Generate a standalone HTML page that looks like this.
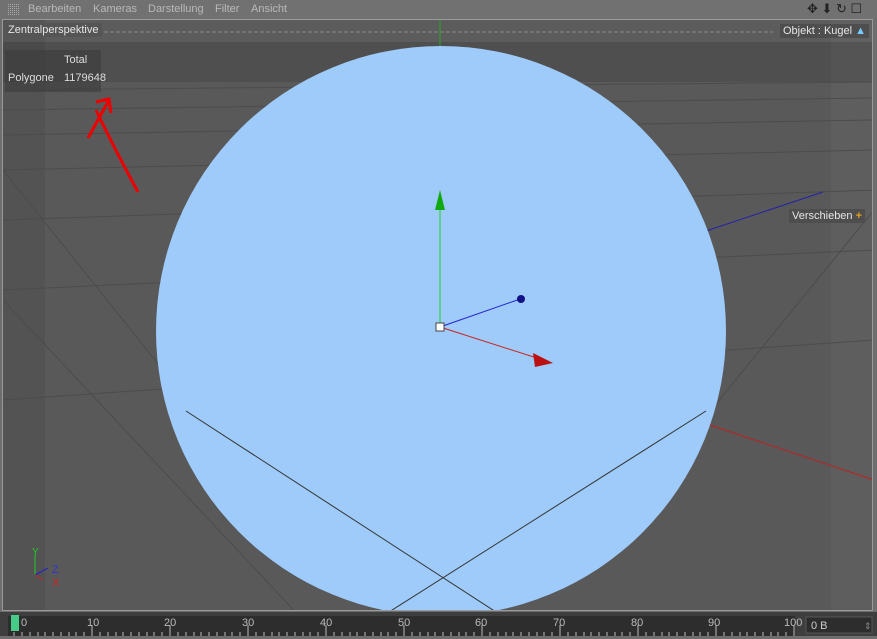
<!DOCTYPE html>
<html><head><style>
body{margin:0;width:877px;height:636px;overflow:hidden;background:#6e6e6e;font-family:"Liberation Sans",sans-serif;font-size:11px;position:relative}
.menu{position:absolute;left:0;top:0;width:877px;height:19px;background:#717171;color:#b9b9b9}
.menu span{position:absolute;top:3px}
.vp{position:absolute;left:2px;top:19px;width:871px;height:592px;background:#595959;border:1px solid #9a9a9a;box-sizing:border-box;overflow:hidden}
.lbl{position:absolute;background:#4e4e4e;color:#e6e6e6;padding:1px 3px}
.tl{position:absolute;left:0;top:612px;width:877px;height:24px;background:#3e3e3e}
</style></head><body>
<div class="menu">
<svg style="position:absolute;left:8px;top:4px" width="12" height="12"><pattern id="p" width="2" height="2" patternUnits="userSpaceOnUse"><rect width="1" height="1" fill="#aaa"/></pattern><rect width="12" height="12" fill="url(#p)"/></svg>
<span style="left:28px">Bearbeiten</span><span style="left:93px">Kameras</span><span style="left:148px">Darstellung</span><span style="left:215px">Filter</span><span style="left:251px">Ansicht</span>
<span style="left:807px;top:1px;color:#222;font-size:13px">✥ ⬇ ↻ ☐</span>
</div>
<div class="vp">
<svg width="871" height="592" style="position:absolute;left:0;top:0">
<rect x="0" y="0" width="871" height="22" fill="#5c5c5c"/>
<rect x="0" y="22" width="871" height="40" fill="#4f4f4f"/>
<rect x="0" y="0" width="42" height="592" fill="#000" opacity=".06"/>
<rect x="828" y="0" width="43" height="592" fill="#fff" opacity=".03"/>
<g stroke="#4c4c4c" stroke-width="1" fill="none">
<line x1="0" y1="70" x2="871" y2="62"/><line x1="0" y1="90" x2="871" y2="78"/><line x1="0" y1="115" x2="871" y2="100"/><line x1="0" y1="150" x2="871" y2="130"/><line x1="0" y1="200" x2="871" y2="170"/><line x1="0" y1="270" x2="871" y2="230"/><line x1="0" y1="380" x2="871" y2="320"/>
<line x1="0" y1="280" x2="300" y2="600"/><line x1="0" y1="150" x2="200" y2="400"/><line x1="871" y1="190" x2="700" y2="400"/>
</g>
<line x1="437" y1="0" x2="437" y2="30" stroke="#2a2" />
<line x1="680" y1="396" x2="871" y2="460" stroke="#b22"/>
<line x1="700" y1="212" x2="820" y2="172" stroke="#22a"/>
<circle cx="438" cy="311" r="285" fill="#9ecbfa"/>
<g stroke="#333" stroke-width="1"><line x1="183" y1="391" x2="493" y2="592"/><line x1="703" y1="391" x2="386" y2="592"/></g>
<line x1="437" y1="305" x2="437" y2="175" stroke="#2c2"/><polygon points="432,190 437,170 442,190" fill="#1a1"/>
<line x1="437" y1="307" x2="520" y2="278" stroke="#22c"/><circle cx="518" cy="279" r="4" fill="#118"/>
<line x1="437" y1="307" x2="540" y2="340" stroke="#c22"/><polygon points="530,333 550,343 532,347" fill="#b11"/>
<rect x="433" y="303" width="8" height="8" fill="#fff" stroke="#444"/>
<path d="M106 80 L85 118 M93 82 L106 79 L108 93 M93 90 Q112 130 135 172" stroke="#e00" stroke-width="3" fill="none"/>
<line x1="32" y1="535" x2="32" y2="555" stroke="#2c2"/><line x1="32" y1="555" x2="45" y2="548" stroke="#22c"/><line x1="32" y1="555" x2="40" y2="560" stroke="#c22"/>
<text x="29" y="535" fill="#2c2" font-size="10" font-family="Liberation Sans">Y</text>
<text x="49" y="553" fill="#33c" font-size="11" font-family="Liberation Sans">Z</text>
<text x="49" y="566" fill="#c22" font-size="11" font-family="Liberation Sans">X</text>
<line x1="95" y1="12" x2="770" y2="12" stroke="#888" stroke-dasharray="4,2"/>
</svg>
<div class="lbl" style="left:2px;top:3px;background:#555">Zentralperspektive</div>
<div class="lbl" style="left:777px;top:4px">Objekt : Kugel <span style="color:#7cf">▲</span></div>
<div class="lbl" style="left:2px;top:30px;width:96px;height:42px;padding:0;background:rgba(60,60,60,.6)"></div>
<span style="position:absolute;left:61px;top:34px;color:#ddd">Total</span>
<span style="position:absolute;left:5px;top:52px;color:#ddd">Polygone</span>
<span style="position:absolute;left:61px;top:52px;color:#ddd">1179648</span>
<div class="lbl" style="left:786px;top:189px">Verschieben <span style="color:#e0a020;font-weight:bold">+</span></div>
</div>
<div class="tl">
<svg width="877" height="24">
<rect x="8" y="4" width="787" height="20" fill="#2d2d2d"/>
<rect x="11" y="3" width="8" height="16" fill="#4c8"/>
<g fill="#bbb" font-size="11" font-family="Liberation Sans">
<text x="21" y="14">0</text><text x="87" y="14">10</text><text x="164" y="14">20</text><text x="242" y="14">30</text><text x="320" y="14">40</text><text x="398" y="14">50</text><text x="475" y="14">60</text><text x="553" y="14">70</text><text x="631" y="14">80</text><text x="708" y="14">90</text><text x="784" y="14">100</text></g>
<g stroke="#bbb"><path d="M14 20v4M22 20v4M30 20v4M38 20v4M45 20v4M53 20v4M61 20v4M69 20v4M76 20v4M84 20v4M92 13v11M100 20v4M108 20v4M116 20v4M123 20v4M131 20v4M139 20v4M147 20v4M154 20v4M162 20v4M170 13v11M178 20v4M186 20v4M194 20v4M201 20v4M209 20v4M217 20v4M225 20v4M232 20v4M240 20v4M248 13v11M256 20v4M264 20v4M272 20v4M279 20v4M287 20v4M295 20v4M303 20v4M310 20v4M318 20v4M326 13v11M334 20v4M342 20v4M350 20v4M357 20v4M365 20v4M373 20v4M381 20v4M388 20v4M396 20v4M404 13v11M412 20v4M420 20v4M428 20v4M435 20v4M443 20v4M451 20v4M459 20v4M466 20v4M474 20v4M482 13v11M490 20v4M498 20v4M506 20v4M513 20v4M521 20v4M529 20v4M537 20v4M544 20v4M552 20v4M560 13v11M568 20v4M576 20v4M584 20v4M591 20v4M599 20v4M607 20v4M615 20v4M622 20v4M630 20v4M638 13v11M646 20v4M654 20v4M662 20v4M669 20v4M677 20v4M685 20v4M693 20v4M700 20v4M708 20v4M716 13v11M724 20v4M732 20v4M740 20v4M747 20v4M755 20v4M763 20v4M771 20v4M778 20v4M786 20v4M794 13v11"/></g>
<rect x="806" y="5" width="66" height="16" fill="#2d2d2d" stroke="#555"/>
<text x="811" y="17" fill="#ccc" font-size="11" font-family="Liberation Sans">0 B</text>
<text x="864" y="17" fill="#888" font-size="9">⇕</text>
</svg>
</div>
</body></html>
